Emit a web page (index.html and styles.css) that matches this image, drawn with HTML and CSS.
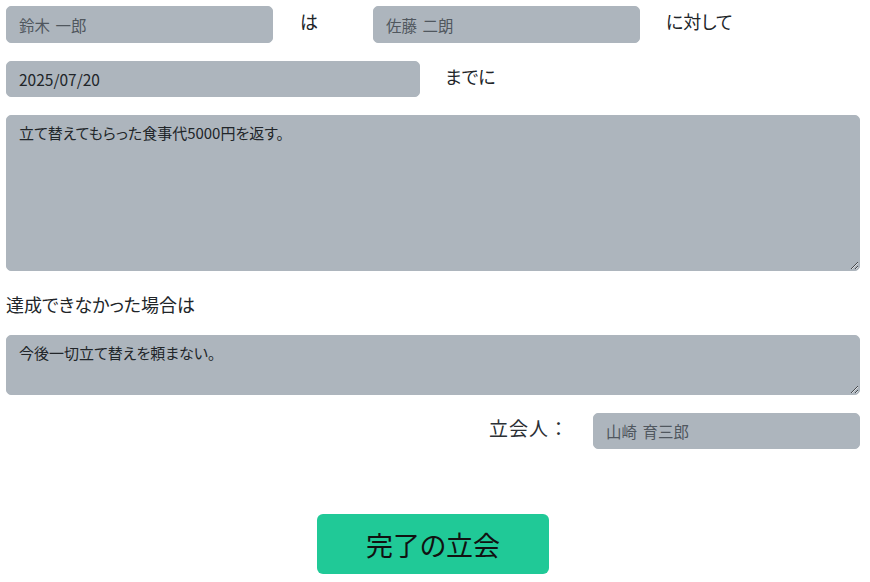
FILE: index.html
```html
<!DOCTYPE html>
<html lang="ja">
<head>
<meta charset="utf-8">
<title>約束</title>
<link rel="stylesheet" href="styles.css">
</head>
<body>
<main class="form">
  <div class="row row-parties">
    <input class="field" type="text" placeholder="鈴木 一郎">
    <span class="lbl lbl-wa">は</span>
    <input class="field" type="text" placeholder="佐藤 二朗">
    <span class="lbl lbl-taishite">に対して</span>
  </div>
  <div class="row row-date">
    <input class="field field-date" type="text" value="2025/07/20">
    <span class="lbl lbl-made">までに</span>
  </div>
  <textarea class="area area-promise">立て替えてもらった食事代5000円を返す。</textarea>
  <div class="caption">達成できなかった場合は</div>
  <textarea class="area area-penalty">今後一切立て替えを頼まない。</textarea>
  <div class="row row-witness">
    <span class="lbl lbl-witness">立会人：</span>
    <input class="field field-witness" type="text" placeholder="山崎 育三郎">
  </div>
  <div class="actions">
    <button class="btn-done" type="button">完了の立会</button>
  </div>
</main>
</body>
</html>
```
FILE: styles.css
```css
* {
  box-sizing: border-box;
}

html, body {
  margin: 0;
  background: #ffffff;
}

body {
  padding: 6px 10px 0 6px;
  font-family: "Noto Sans CJK JP", "Noto Sans", sans-serif;
  font-feature-settings: "palt";
  color: #212529;
}

.form {
  display: flex;
  flex-direction: column;
}

.row {
  display: flex;
  align-items: flex-start;
}

.field {
  height: 37px;
  padding: 0 12px;
  border: 1px solid #adb5bd;
  border-radius: 5px;
  background: #adb5bd;
  color: #212529;
  font-family: inherit;
  font-feature-settings: "palt";
  font-size: 15.5px;
  word-spacing: 2px;
  outline: none;
}

.field::placeholder {
  color: #50575e;
  opacity: 1;
}

.row-parties .field {
  width: 267px;
}

.lbl {
  font-size: 18px;
  line-height: 30px;
}

.lbl-wa {
  width: 100px;
  padding-left: 27px;
}

.lbl-taishite {
  padding-left: 26px;
}

.row-date {
  margin-top: 18px;
}

.field-date {
  width: 414px;
  height: 36px;
}

.lbl-made {
  padding-left: 25px;
}

.area {
  display: block;
  width: 100%;
  padding: 6px 12px;
  border: 1px solid #adb5bd;
  border-radius: 5px;
  background: #adb5bd;
  color: #212529;
  font-family: inherit;
  font-feature-settings: "palt";
  font-size: 15px;
  line-height: 22px;
  outline: none;
}

.area-promise {
  margin-top: 18px;
  height: 156px;
}

.caption {
  margin-top: 18px;
  font-size: 18px;
  line-height: 30px;
}

.area-penalty {
  margin-top: 16px;
  height: 60px;
}

.row-witness {
  margin-top: 18px;
  justify-content: flex-end;
}

.lbl-witness {
  font-size: 19px;
  font-feature-settings: normal;
  letter-spacing: 1px;
  color: #2b3035;
  margin-right: 24px;
}

.field-witness {
  width: 267px;
  height: 36px;
}

.actions {
  margin-top: 65px;
  display: flex;
  justify-content: center;
}

.btn-done {
  width: 232px;
  height: 60px;
  border: none;
  border-radius: 6px;
  background: #20c997;
  color: #111111;
  font-family: inherit;
  font-feature-settings: "palt";
  font-size: 27px;
}
```
